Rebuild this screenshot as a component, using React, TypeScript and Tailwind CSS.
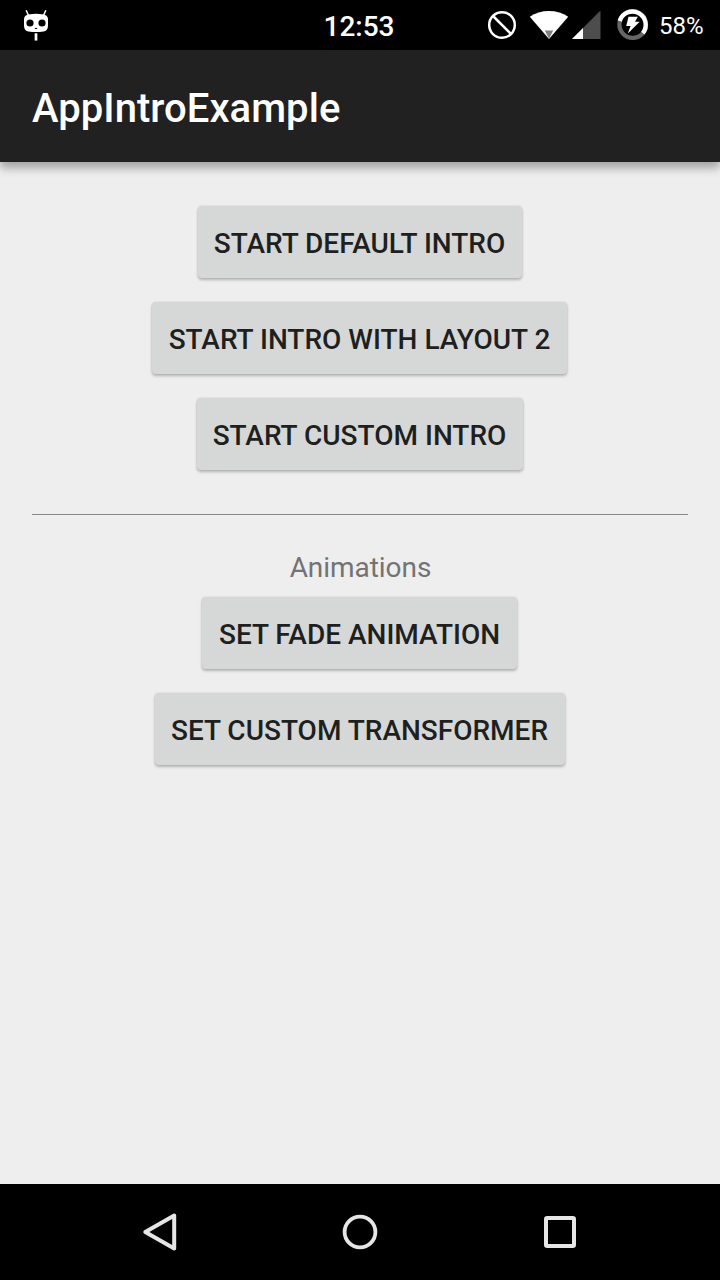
import type { ReactNode } from 'react';

function ActionButton({ width, children }: { width: string; children: ReactNode }) {
  return (
    <button
      type="button"
      className={`${width} h-[72px] shrink-0 whitespace-nowrap rounded-[4px] bg-[#d6d8d7] pt-[3px] text-center text-[28px] leading-[33px] font-medium text-[#1e1f1f] shadow-[0_2px_3px_rgba(0,0,0,0.24),0_0_2px_rgba(0,0,0,0.12)]`}
    >
      {children}
    </button>
  );
}

function StatusBar() {
  return (
    <header className="grid h-[50px] shrink-0 grid-cols-[300px_120px_300px] items-center bg-black text-white">
      <svg className="ml-5 h-[50px] w-8" viewBox="20 0 32 50" aria-hidden="true">
        <path d="M26.4 10.8L28.3 15M45.6 10.8L43.7 15" stroke="#fff" strokeWidth="1.5" strokeLinecap="round" />
        <path d="M30 14.2Q36 13.2 42 14.2Q48 15 48 19V26Q48 31.5 42 31.8Q36 32.4 30 31.8Q24 31.5 24 26V19Q24 15 30 14.2Z" fill="#fff" />
        <circle cx="30" cy="23" r="3.6" />
        <circle cx="42" cy="23" r="3.6" />
        <path d="M34.8 28.4H37.2" stroke="#000" strokeWidth="1" />
        <path d="M36 33.3V40.6" stroke="#fff" strokeWidth="2.7" />
      </svg>
      <span className="pt-[2px] pr-[2px] text-center text-[28px] leading-[33px] font-medium">12:53</span>
      <div className="flex items-center">
        <svg className="ml-[60px] h-[50px] w-[120px]" viewBox="480 0 120 50" aria-hidden="true">
          <circle cx="502" cy="25" r="12.8" fill="none" stroke="#fff" strokeWidth="2.5" />
          <path d="M493 16L511 34" stroke="#fff" strokeWidth="2.5" />
          <path d="M529.8 16.7Q538 11 549 11T568.2 16.7L549 39Z" fill="#fff" />
          <path d="M544.8 30.5H553.2L549 38.8Z" fill="#808080" />
          <path d="M600 11V39H572Z" fill="#4d4d4d" />
          <path d="M583 28V39H572Z" fill="#fff" />
        </svg>
        <svg className="h-[50px] w-[56px]" viewBox="600 0 56 50" aria-hidden="true">
          <path d="M600 11V39" stroke="#4d4d4d" strokeWidth="1" />
          <circle cx="632.7" cy="24.5" r="13.3" fill="none" stroke="#666" strokeWidth="4.3" />
          <path d="M619.7 21A13.3 13.3 0 1 1 642.8 33.2" fill="none" stroke="#fff" strokeWidth="4.3" />
          <path d="M628.5 16.8H637.8L635 21.8H639.7L627.8 33.4L630.6 26H626.2Z" fill="#fff" />
        </svg>
        <span className="ml-[3px] pt-[2px] text-[24px] leading-[28px]">58%</span>
      </div>
    </header>
  );
}

function NavigationBar() {
  return (
    <nav className="flex h-24 shrink-0 items-center justify-center gap-[152px] bg-black text-[#e6e6e6]">
      <button type="button" aria-label="Back">
        <svg className="h-12 w-12" viewBox="136 1208 48 48" fill="none" stroke="currentColor" strokeWidth="4" strokeLinejoin="round">
          <path d="M174.2 1215.5V1248.5L145.3 1232Z" />
        </svg>
      </button>
      <button type="button" aria-label="Home">
        <svg className="h-12 w-12" viewBox="0 0 48 48" fill="none" stroke="currentColor" strokeWidth="3.8">
          <circle cx="24" cy="24" r="15.4" />
        </svg>
      </button>
      <button type="button" aria-label="Recent apps">
        <svg className="h-12 w-12" viewBox="0 0 48 48" fill="none" stroke="currentColor" strokeWidth="4">
          <rect x="10" y="10" width="28" height="28" rx="1.2" />
        </svg>
      </button>
    </nav>
  );
}

export default function App() {
  return (
    <div className="flex h-[1280px] w-[720px] flex-col overflow-hidden bg-[#eeeeee] font-[Roboto,'Noto_Sans',sans-serif]">
      <StatusBar />
      <div className="relative flex h-28 shrink-0 items-center bg-[#212121] pl-8 pt-1 text-white shadow-[0_6px_9px_rgba(0,0,0,0.32)]">
        <h1 className="text-[40px] leading-[47px] font-medium tracking-[0.05px]">AppIntroExample</h1>
      </div>
      <main className="flex flex-1 flex-col items-center px-8 pt-11">
        <div className="flex flex-col items-center gap-6 pr-px">
          <ActionButton width="w-[324px]">START DEFAULT INTRO</ActionButton>
          <ActionButton width="w-[415px]">START INTRO WITH LAYOUT 2</ActionButton>
          <ActionButton width="w-[326px]">START CUSTOM INTRO</ActionButton>
        </div>
        <hr className="mt-11 w-full border-t border-[#888888]" />
        <h2 className="mt-9 pl-px text-[28px] leading-[33px] font-normal tracking-[-0.05px] text-[#737373]">Animations</h2>
        <div className="mt-[13px] flex flex-col items-center gap-6 pr-px">
          <ActionButton width="w-[315px]">SET FADE ANIMATION</ActionButton>
          <ActionButton width="w-[410px]">SET CUSTOM TRANSFORMER</ActionButton>
        </div>
      </main>
      <NavigationBar />
    </div>
  );
}
